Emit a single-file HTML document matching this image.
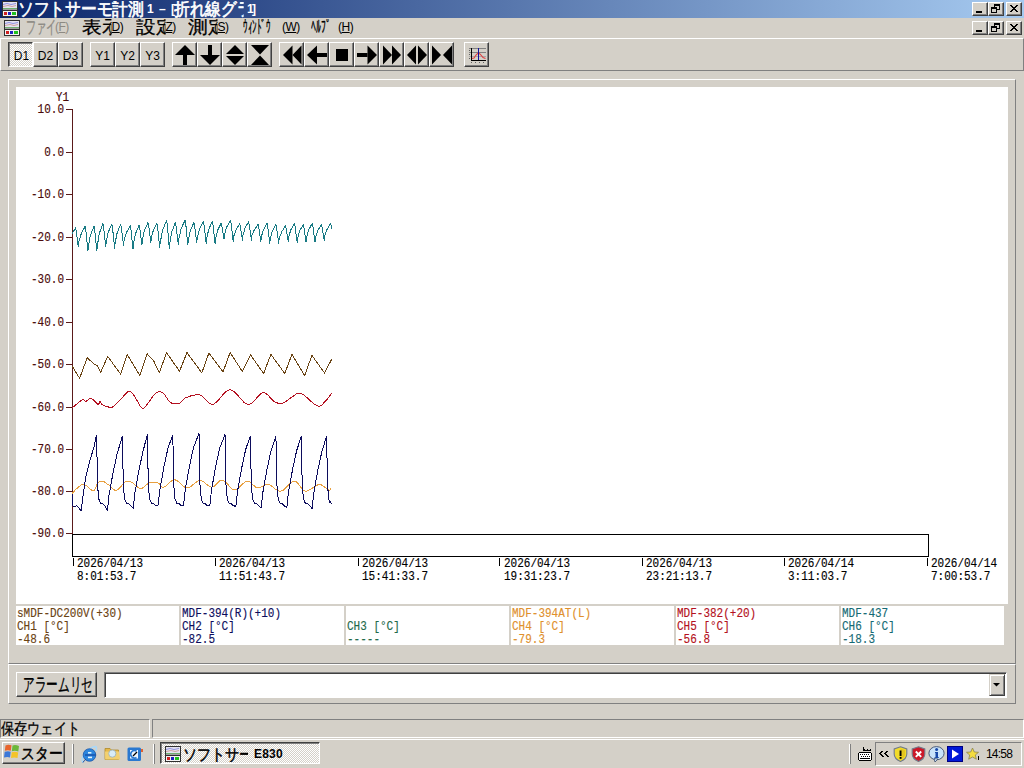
<!DOCTYPE html>
<html><head><meta charset="utf-8">
<style>
*{margin:0;padding:0;box-sizing:border-box}
html,body{width:1024px;height:768px;overflow:hidden;background:#d4d0c8;font-family:"Liberation Sans",sans-serif;font-size:12px;color:#000}
.abs{position:absolute}
.jp{position:absolute;white-space:nowrap;transform-origin:0 0;font-family:"Liberation Sans",sans-serif}
.tx{position:absolute;white-space:nowrap}
#title{position:absolute;left:0;top:0;width:1024px;height:18px;background:linear-gradient(to right,#0a246a,#a6caf0)}
.cb{position:absolute;width:16px;height:14px;background:#d4d0c8;border:1px solid;border-color:#fff #404040 #404040 #fff;box-shadow:inset -1px -1px 0 #808080}
.cb svg{position:absolute;left:0;top:0}
.tb{position:absolute;top:42px;width:25px;height:25px;background:#d4d0c8;border:1px solid;border-color:#fff #404040 #404040 #fff;box-shadow:inset -1px -1px 0 #808080}
.tb.pressed{border-color:#404040 #fff #fff #404040;box-shadow:inset 1px 1px 0 #808080;background-color:#fff;background-image:linear-gradient(45deg,#d4d0c8 25%,transparent 25%,transparent 75%,#d4d0c8 75%),linear-gradient(45deg,#d4d0c8 25%,transparent 25%,transparent 75%,#d4d0c8 75%);background-size:2px 2px;background-position:0 0,1px 1px}
.tbt{position:absolute;left:0;width:23px;top:7px;text-align:center;font-size:12px;line-height:12px}
.raised{position:absolute;border:1px solid;border-color:#fff #808080 #808080 #fff}
.yl{position:absolute;right:960px;font-family:"Liberation Mono",monospace;font-size:11px;line-height:12px;transform:scaleY(1.13);transform-origin:0 0;color:#4a0a0a;white-space:nowrap;text-align:right;-webkit-text-stroke:0.12px #4a0a0a}
.xl{position:absolute;font-family:"Liberation Mono",monospace;font-size:11px;line-height:12px;transform:scaleY(1.13);transform-origin:0 0;color:#000;white-space:nowrap;-webkit-text-stroke:0.12px #000}
.cell{position:absolute;top:606px;width:163px;height:39px;background:#fff;font-family:"Liberation Mono",monospace;font-size:11px;white-space:nowrap;-webkit-text-stroke:0.12px currentColor}
.cell .ln{position:absolute;left:1px;line-height:12px;transform:scaleY(1.13);transform-origin:0 0}
</style></head><body>
<div id="title">
 <svg class="abs" style="left:2px;top:1px" width="16" height="16" viewBox="0 0 16 16">
  <rect x="0" y="0" width="16" height="16" fill="#303030"/>
  <rect x="1" y="1" width="14" height="7" fill="#e4e4f0"/>
  <polyline points="1,3.5 5,2.5 9,3.5 14,2.5" stroke="#9090e0" fill="none"/>
  <polyline points="1,5.5 6,4.5 10,5.5 14,4.5" stroke="#d0a0a0" fill="none"/>
  <rect x="1" y="7" width="14" height="1" fill="#70b070"/>
  <rect x="1" y="8" width="14" height="1" fill="#a0a0a0"/>
  <rect x="1" y="10" width="14" height="5" fill="#f4f4f4"/>
  <rect x="2" y="11" width="3" height="3" fill="#d02020"/>
  <rect x="6" y="11" width="3" height="3" fill="#2020c0"/>
  <rect x="10" y="11" width="4" height="3" fill="#20c020"/>
 </svg>
 <div class="jp" style="left:18.46px;top:0.68px;width:146.59px;height:17.65px;overflow:hidden;font-size:17.65px;line-height:17.65px;transform:scaleX(0.8729);color:#fff;-webkit-text-stroke:0.7px #fff">ソフトサーモ計測－計測</div><div class="tx" style="left:147px;top:3px;font-size:12px;line-height:12px;color:#fff;font-weight:bold;font-family:'Liberation Sans',sans-serif;">1</div><div class="tx" style="left:159px;top:3px;font-size:12px;line-height:12px;color:#fff;font-weight:bold;font-family:'Liberation Sans',sans-serif;">–</div><div class="tx" style="left:171px;top:3px;font-size:12px;line-height:12px;color:#fff;font-weight:bold;font-family:'Liberation Sans',sans-serif;">[</div><div class="jp" style="left:174.47px;top:0.68px;width:80.41px;height:17.65px;overflow:hidden;font-size:17.65px;line-height:17.65px;transform:scaleX(0.8698);color:#fff;-webkit-text-stroke:0.7px #fff">折れ線グラフ</div><div class="tx" style="left:247px;top:3px;font-size:12px;line-height:12px;color:#fff;font-weight:bold;font-family:'Liberation Sans',sans-serif;">1</div><div class="tx" style="left:252px;top:3px;font-size:12px;line-height:12px;color:#fff;font-weight:bold;font-family:'Liberation Sans',sans-serif;">]</div>
 <div class="cb" style="left:972px;top:2px"><svg width="14" height="12"><g fill="#000" shape-rendering="crispEdges"><rect x="3" y="8" width="6" height="1"/><rect x="3" y="9" width="6" height="1"/></g></svg></div><div class="cb" style="left:988px;top:2px"><svg width="14" height="12"><g fill="#000" shape-rendering="crispEdges"><rect x="5" y="1" width="6" height="1"/><rect x="5" y="2" width="6" height="1"/><rect x="5" y="3" width="1" height="1"/><rect x="10" y="3" width="1" height="1"/><rect x="2" y="4" width="6" height="1"/><rect x="10" y="4" width="1" height="1"/><rect x="2" y="5" width="6" height="1"/><rect x="10" y="5" width="1" height="1"/><rect x="2" y="6" width="1" height="1"/><rect x="7" y="6" width="4" height="1"/><rect x="2" y="7" width="1" height="1"/><rect x="7" y="7" width="1" height="1"/><rect x="2" y="8" width="1" height="1"/><rect x="7" y="8" width="1" height="1"/><rect x="2" y="9" width="6" height="1"/></g></svg></div><div class="cb" style="left:1006px;top:2px"><svg width="14" height="12"><g fill="#000" shape-rendering="crispEdges"><rect x="3" y="2" width="2" height="1"/><rect x="9" y="2" width="2" height="1"/><rect x="4" y="3" width="2" height="1"/><rect x="8" y="3" width="2" height="1"/><rect x="5" y="4" width="4" height="1"/><rect x="6" y="5" width="2" height="1"/><rect x="5" y="6" width="4" height="1"/><rect x="4" y="7" width="2" height="1"/><rect x="8" y="7" width="2" height="1"/><rect x="3" y="8" width="2" height="1"/><rect x="9" y="8" width="2" height="1"/></g></svg></div>
</div>
<div id="menu">
 <svg class="abs" style="left:4px;top:20px" width="16" height="16" viewBox="0 0 16 16">
  <rect x="0" y="0" width="16" height="16" fill="#303030"/>
  <rect x="1" y="1" width="14" height="7" fill="#e4e4f0"/>
  <polyline points="1,3.5 5,2.5 9,3.5 14,2.5" stroke="#9090e0" fill="none"/>
  <polyline points="1,5.5 6,4.5 10,5.5 14,4.5" stroke="#d0a0a0" fill="none"/>
  <rect x="1" y="7" width="14" height="1" fill="#70b070"/>
  <rect x="1" y="8" width="14" height="1" fill="#a0a0a0"/>
  <rect x="1" y="10" width="14" height="5" fill="#f4f4f4"/>
  <rect x="2" y="11" width="3" height="3" fill="#d02020"/>
  <rect x="6" y="11" width="3" height="3" fill="#2020c0"/>
  <rect x="10" y="11" width="4" height="3" fill="#20c020"/>
 </svg>
 <div class="jp" style="left:26.00px;top:18.68px;width:53.94px;height:17.65px;overflow:hidden;font-size:17.65px;line-height:17.65px;transform:scaleX(0.5667);color:#8d8a83;-webkit-text-stroke:0.3px #8d8a83">ファイル</div><div class="tx" style="left:55px;top:21px;font-size:12px;line-height:12px;color:#8d8a83;font-weight:normal;font-family:'Liberation Sans',sans-serif;letter-spacing:-0.5px">(<u>F</u>)</div><div class="jp" style="left:82.08px;top:18.68px;width:27.47px;height:17.65px;overflow:hidden;font-size:17.65px;line-height:17.65px;transform:scaleX(1.0897);color:#000;-webkit-text-stroke:0.3px #000">表示</div><div class="tx" style="left:108px;top:21px;font-size:12px;line-height:12px;color:#000;font-weight:normal;font-family:'Liberation Sans',sans-serif;letter-spacing:-0.5px">(<u>D</u>)</div><div class="jp" style="left:136.08px;top:18.68px;width:27.47px;height:17.65px;overflow:hidden;font-size:17.65px;line-height:17.65px;transform:scaleX(1.0897);color:#000;-webkit-text-stroke:0.3px #000">設定</div><div class="tx" style="left:162px;top:21px;font-size:12px;line-height:12px;color:#000;font-weight:normal;font-family:'Liberation Sans',sans-serif;letter-spacing:-0.5px">(<u>Z</u>)</div><div class="jp" style="left:188.08px;top:18.68px;width:27.47px;height:17.65px;overflow:hidden;font-size:17.65px;line-height:17.65px;transform:scaleX(1.0897);color:#000;-webkit-text-stroke:0.3px #000">測定</div><div class="tx" style="left:214px;top:21px;font-size:12px;line-height:12px;color:#000;font-weight:normal;font-family:'Liberation Sans',sans-serif;letter-spacing:-0.5px">(<u>S</u>)</div><div class="jp" style="left:243.12px;top:18.68px;width:80.41px;height:17.65px;overflow:hidden;font-size:17.65px;line-height:17.65px;transform:scaleX(0.5008);color:#000;-webkit-text-stroke:0.3px #000">ｳｨﾝﾄﾞｳ</div><div class="tx" style="left:282px;top:21px;font-size:12px;line-height:12px;color:#000;font-weight:normal;font-family:'Liberation Sans',sans-serif;letter-spacing:-0.5px">(<u>W</u>)</div><div class="jp" style="left:311.04px;top:18.68px;width:53.94px;height:17.65px;overflow:hidden;font-size:17.65px;line-height:17.65px;transform:scaleX(0.5464);color:#000;-webkit-text-stroke:0.3px #000">ﾍﾙﾌﾟ</div><div class="tx" style="left:338px;top:21px;font-size:12px;line-height:12px;color:#000;font-weight:normal;font-family:'Liberation Sans',sans-serif;letter-spacing:-0.5px">(<u>H</u>)</div>
 <div class="cb" style="left:972px;top:21px"><svg width="14" height="12"><g fill="#000" shape-rendering="crispEdges"><rect x="3" y="8" width="6" height="1"/><rect x="3" y="9" width="6" height="1"/></g></svg></div><div class="cb" style="left:988px;top:21px"><svg width="14" height="12"><g fill="#000" shape-rendering="crispEdges"><rect x="5" y="1" width="6" height="1"/><rect x="5" y="2" width="6" height="1"/><rect x="5" y="3" width="1" height="1"/><rect x="10" y="3" width="1" height="1"/><rect x="2" y="4" width="6" height="1"/><rect x="10" y="4" width="1" height="1"/><rect x="2" y="5" width="6" height="1"/><rect x="10" y="5" width="1" height="1"/><rect x="2" y="6" width="1" height="1"/><rect x="7" y="6" width="4" height="1"/><rect x="2" y="7" width="1" height="1"/><rect x="7" y="7" width="1" height="1"/><rect x="2" y="8" width="1" height="1"/><rect x="7" y="8" width="1" height="1"/><rect x="2" y="9" width="6" height="1"/></g></svg></div><div class="cb" style="left:1006px;top:21px"><svg width="14" height="12"><g fill="#000" shape-rendering="crispEdges"><rect x="3" y="2" width="2" height="1"/><rect x="9" y="2" width="2" height="1"/><rect x="4" y="3" width="2" height="1"/><rect x="8" y="3" width="2" height="1"/><rect x="5" y="4" width="4" height="1"/><rect x="6" y="5" width="2" height="1"/><rect x="5" y="6" width="4" height="1"/><rect x="4" y="7" width="2" height="1"/><rect x="8" y="7" width="2" height="1"/><rect x="3" y="8" width="2" height="1"/><rect x="9" y="8" width="2" height="1"/></g></svg></div>
</div>
<div class="abs" style="left:0;top:38px;width:1024px;height:33px;border:1px solid;border-color:#fff #808080 #808080 #fff"></div>
<div class="tb pressed" style="left:8px"><span class="tbt" style="left:1px">D1</span></div><div class="tb" style="left:33px"><span class="tbt">D2</span></div><div class="tb" style="left:58px"><span class="tbt">D3</span></div><div class="tb" style="left:90px"><span class="tbt">Y1</span></div><div class="tb" style="left:115px"><span class="tbt">Y2</span></div><div class="tb" style="left:140px"><span class="tbt">Y3</span></div><div class="tb" style="left:172px"><svg width="25" height="25" viewBox="172 42 25 25" style="position:absolute;left:-1px;top:-1px"><polygon points="175,55 185,45 195,55"/><rect x="183" y="55" width="4" height="10"/></svg></div><div class="tb" style="left:197px"><svg width="25" height="25" viewBox="197 42 25 25" style="position:absolute;left:-1px;top:-1px"><rect x="208" y="45" width="4" height="10"/><polygon points="200,55 220,55 210,65"/></svg></div><div class="tb" style="left:222px"><svg width="25" height="25" viewBox="222 42 25 25" style="position:absolute;left:-1px;top:-1px"><polygon points="226,54 235,45 244,54"/><polygon points="226,56 244,56 235,65"/></svg></div><div class="tb" style="left:247px"><svg width="25" height="25" viewBox="247 42 25 25" style="position:absolute;left:-1px;top:-1px"><polygon points="251,45 269,45 260,54.5"/><polygon points="260,55.5 269,65 251,65"/></svg></div><div class="tb" style="left:279px"><svg width="25" height="25" viewBox="279 42 25 25" style="position:absolute;left:-1px;top:-1px"><polygon points="283,55 292.5,45.5 292.5,64.5"/><polygon points="292.5,55 301.5,45.5 301.5,64.5"/></svg></div><div class="tb" style="left:304px"><svg width="25" height="25" viewBox="304 42 25 25" style="position:absolute;left:-1px;top:-1px"><polygon points="307,55 317,45.5 317,64.5"/><rect x="317" y="53" width="10" height="4"/></svg></div><div class="tb" style="left:329px"><svg width="25" height="25" viewBox="329 42 25 25" style="position:absolute;left:-1px;top:-1px"><rect x="336" y="49" width="12" height="12"/></svg></div><div class="tb" style="left:354px"><svg width="25" height="25" viewBox="354 42 25 25" style="position:absolute;left:-1px;top:-1px"><rect x="357" y="53" width="10.5" height="4"/><polygon points="367.5,45.5 377,55 367.5,64.5"/></svg></div><div class="tb" style="left:379px"><svg width="25" height="25" viewBox="379 42 25 25" style="position:absolute;left:-1px;top:-1px"><polygon points="383,45.5 392,55 383,64.5"/><polygon points="392,45.5 401,55 392,64.5"/></svg></div><div class="tb" style="left:404px"><svg width="25" height="25" viewBox="404 42 25 25" style="position:absolute;left:-1px;top:-1px"><polygon points="407,55 416,45.5 416,64.5"/><polygon points="418,45.5 427,55 418,64.5"/></svg></div><div class="tb" style="left:429px"><svg width="25" height="25" viewBox="429 42 25 25" style="position:absolute;left:-1px;top:-1px"><polygon points="432,45.5 441,55 432,64.5"/><polygon points="443,55 452,45.5 452,64.5"/></svg></div><div class="tb" style="left:464px"><svg width="25" height="25" viewBox="464 42 25 25" style="position:absolute;left:-1px;top:-1px"><g stroke="#808080" stroke-width="1" shape-rendering="crispEdges"><line x1="469" y1="48.5" x2="486" y2="48.5"/><line x1="469" y1="52.5" x2="486" y2="52.5"/><line x1="469" y1="56.5" x2="486" y2="56.5" stroke="#a8a8a8"/></g><g shape-rendering="crispEdges"><rect x="471" y="48" width="1" height="13" fill="#000"/><rect x="471" y="60" width="15" height="1" fill="#000"/><g fill="#606060"><rect x="469" y="50" width="1" height="1"/><rect x="469" y="54" width="1" height="1"/><rect x="469" y="58" width="1" height="1"/><rect x="471" y="62" width="1" height="1"/><rect x="475" y="62" width="1" height="1"/><rect x="479" y="62" width="1" height="1"/><rect x="483" y="62" width="1" height="1"/></g></g><polyline points="472,58.5 474,58 476,55 478.5,52.5 481,55 483,57.5 485.5,58.5" fill="none" stroke="#e04040" stroke-width="1.1"/><rect x="478" y="48" width="1.3" height="12" fill="#1010a0" shape-rendering="crispEdges"/></svg></div>
<div class="raised" style="left:8px;top:79px;width:1008px;height:585px"></div>
<div class="abs" style="left:16px;top:87px;width:992px;height:517px;background:#fff"></div>
<svg class="abs" style="left:0;top:0" width="1024" height="768" viewBox="0 0 1024 768">
 <g stroke="#5a1a1a" stroke-width="1">
  <line x1="72.5" y1="109" x2="72.5" y2="534"/>
  <line x1="66" y1="109.5" x2="72" y2="109.5"/><line x1="66" y1="152.5" x2="72" y2="152.5"/><line x1="66" y1="194.5" x2="72" y2="194.5"/><line x1="66" y1="237.5" x2="72" y2="237.5"/><line x1="66" y1="279.5" x2="72" y2="279.5"/><line x1="66" y1="322.5" x2="72" y2="322.5"/><line x1="66" y1="364.5" x2="72" y2="364.5"/><line x1="66" y1="407.5" x2="72" y2="407.5"/><line x1="66" y1="449.5" x2="72" y2="449.5"/><line x1="66" y1="491.5" x2="72" y2="491.5"/><line x1="66" y1="533.5" x2="72" y2="533.5"/>
 </g>
 <rect x="72.5" y="534.5" width="856" height="22" fill="none" stroke="#000"/>
 <g stroke="#000"><line x1="73.5" y1="558" x2="73.5" y2="566"/><line x1="215.5" y1="558" x2="215.5" y2="566"/><line x1="358.5" y1="558" x2="358.5" y2="566"/><line x1="499.5" y1="558" x2="499.5" y2="566"/><line x1="642.5" y1="558" x2="642.5" y2="566"/><line x1="784.5" y1="558" x2="784.5" y2="566"/><line x1="927.5" y1="558" x2="927.5" y2="566"/></g>
 <g fill="none" stroke-width="1" stroke-linejoin="round" shape-rendering="crispEdges">
  <polyline points="72.00,234.00 75.50,227.80 76.30,231.80 78.30,246.90 78.80,241.90 81.26,233.58 85.10,226.40 85.90,230.40 87.90,251.00 88.40,246.00 90.44,235.01 94.00,226.40 94.80,230.40 96.80,251.00 97.30,246.00 99.34,233.25 102.90,223.70 103.70,227.70 105.70,246.90 106.20,241.90 108.24,232.28 111.80,224.40 112.60,228.40 114.60,248.30 115.10,243.30 117.14,232.77 120.70,224.40 121.50,228.40 123.50,245.60 124.00,240.60 126.40,232.66 130.20,225.70 131.00,229.70 133.00,249.00 133.50,244.00 135.54,233.59 139.10,225.30 139.90,229.30 141.90,244.90 142.40,239.90 144.44,230.41 148.00,222.60 148.80,226.60 150.80,242.80 151.30,237.80 153.34,230.38 156.90,223.70 157.70,227.70 159.70,247.60 160.20,242.60 162.66,230.11 166.50,220.70 167.30,224.70 169.30,248.30 169.80,243.30 171.84,231.59 175.40,222.60 176.20,226.60 178.20,244.20 178.70,239.20 181.16,228.66 185.00,220.30 185.80,224.30 187.80,244.90 188.30,239.90 190.34,230.41 193.90,222.60 194.70,226.60 196.70,242.80 197.20,237.80 199.60,229.02 203.40,221.60 204.20,225.60 206.20,243.50 206.70,238.50 208.74,229.26 212.30,221.60 213.10,225.60 215.10,243.50 215.60,238.50 217.64,230.18 221.20,223.00 222.00,227.00 224.00,239.40 224.50,234.40 226.72,226.99 230.40,220.30 231.20,224.30 233.20,241.50 233.70,236.50 235.98,229.93 239.70,223.70 240.50,227.70 242.50,240.10 243.00,235.10 245.04,228.07 248.60,221.60 249.40,225.60 251.40,240.10 251.90,235.10 254.30,229.90 258.10,224.40 258.90,228.40 260.90,241.50 261.40,236.50 263.44,229.74 267.00,223.40 267.80,227.40 269.80,243.50 270.30,238.50 272.34,231.09 275.90,224.40 276.70,228.40 278.70,243.50 279.20,238.50 281.66,231.93 285.50,225.70 286.30,229.70 288.30,241.50 288.80,236.50 290.84,229.74 294.40,223.40 295.20,227.40 297.20,242.80 297.70,237.80 299.74,230.84 303.30,224.40 304.10,228.40 306.10,242.10 306.60,237.10 308.64,229.94 312.20,223.40 313.00,227.40 315.00,242.10 315.50,237.10 317.78,230.59 321.50,224.40 322.30,228.40 324.30,240.80 324.80,235.80 326.96,229.49 330.60,223.40 332.00,229.00" stroke="#187a84"/>
  <polyline points="72.00,366.00 79.60,378.30 87.20,357.80 94.00,364.00 97.40,365.60 100.80,372.80 102.50,368.00 107.70,356.40 120.70,374.20 127.10,354.40 139.80,375.60 147.00,353.70 153.50,360.50 159.40,372.80 166.50,352.60 179.50,371.20 187.00,352.60 201.80,372.80 208.90,353.00 223.00,372.00 230.10,352.60 242.40,371.50 250.60,355.00 263.60,373.50 270.90,354.40 284.80,373.50 291.90,354.40 304.70,375.60 311.90,355.30 324.50,373.00 331.60,359.40" stroke="#6a4414"/>
  <polyline points="72.00,408.00 73.53,406.73 75.75,404.84 78.24,402.77 80.60,400.94 82.40,399.80 83.52,399.56 84.23,399.95 84.73,400.61 85.19,401.21 85.80,401.40 86.59,401.04 87.42,400.36 88.28,399.57 89.11,398.88 89.90,398.50 90.60,398.44 91.24,398.56 91.87,398.84 92.54,399.26 93.30,399.80 94.22,400.63 95.25,401.78 96.31,402.96 97.30,403.93 98.10,404.40 98.68,404.15 99.10,403.36 99.43,402.38 99.74,401.54 100.10,401.20 100.46,401.48 100.77,402.15 101.11,403.02 101.56,403.90 102.20,404.60 103.10,405.13 104.22,405.60 105.44,406.02 106.64,406.39 107.70,406.70 108.54,407.06 109.24,407.46 109.93,407.76 110.74,407.79 111.80,407.40 113.18,406.49 114.78,405.16 116.52,403.56 118.29,401.86 120.00,400.20 121.68,398.38 123.41,396.28 125.11,394.24 126.73,392.57 128.20,391.60 129.44,391.37 130.50,391.66 131.49,392.42 132.52,393.55 133.70,395.00 135.13,397.11 136.72,399.94 138.35,402.95 139.89,405.61 141.20,407.40 142.17,408.26 142.89,408.56 143.53,408.35 144.27,407.71 145.30,406.70 146.73,405.04 148.45,402.69 150.27,400.07 152.01,397.60 153.50,395.70 154.67,394.41 155.63,393.44 156.49,392.74 157.35,392.28 158.30,392.00 159.33,391.88 160.39,391.95 161.47,392.24 162.61,392.81 163.80,393.70 165.04,395.15 166.33,397.14 167.67,399.28 169.08,401.23 170.60,402.60 172.29,403.36 174.14,403.77 176.04,403.86 177.87,403.69 179.50,403.30 180.77,402.55 181.74,401.42 182.70,400.10 183.89,398.83 185.60,397.80 187.97,396.87 190.83,395.90 193.94,395.11 197.08,394.74 200.00,395.00 202.62,396.49 205.10,399.04 207.57,401.80 210.16,403.87 213.00,404.40 216.15,402.51 219.51,398.79 223.01,394.54 226.57,391.04 230.10,389.60 233.66,391.12 237.30,394.75 240.95,399.11 244.51,402.85 247.90,404.60 251.14,403.60 254.29,400.76 257.32,397.21 260.20,394.11 262.90,392.60 265.40,393.11 267.72,394.87 269.89,397.24 271.94,399.57 273.90,401.20 275.68,402.18 277.25,402.94 278.76,403.42 280.33,403.56 282.10,403.30 284.15,402.43 286.40,401.00 288.70,399.31 290.95,397.67 293.00,396.40 294.68,395.30 296.08,394.17 297.46,393.29 299.08,392.94 301.20,393.40 304.08,395.21 307.56,398.19 311.23,401.51 314.71,404.39 317.60,406.00 319.82,406.08 321.63,405.18 323.16,403.68 324.54,401.99 325.90,400.50 327.30,399.07 328.64,397.43 329.86,395.81 330.87,394.39 331.60,393.40" stroke="#b41020"/>
  <polyline points="72.00,493.40 72.98,492.40 74.37,490.94 75.98,489.31 77.59,487.77 79.00,486.60 80.13,485.75 81.11,485.02 82.06,484.52 83.12,484.31 84.40,484.50 86.03,485.42 87.94,487.01 89.92,488.76 91.77,490.17 93.30,490.70 94.42,490.09 95.25,488.68 95.94,486.89 96.61,485.12 97.40,483.80 98.28,482.88 99.17,482.09 100.10,481.49 101.10,481.14 102.20,481.10 103.42,481.47 104.74,482.20 106.13,483.15 107.56,484.20 109.00,485.20 110.45,486.39 111.92,487.86 113.43,489.26 114.98,490.23 116.60,490.40 118.33,489.41 120.17,487.51 122.03,485.23 123.83,483.15 125.50,481.80 126.97,481.26 128.30,481.15 129.58,481.38 130.88,481.87 132.30,482.50 133.83,483.57 135.42,485.14 137.06,486.78 138.75,488.07 140.50,488.60 142.34,488.05 144.26,486.72 146.22,485.04 148.16,483.49 150.00,482.50 151.78,482.14 153.54,482.09 155.24,482.29 156.84,482.65 158.30,483.10 159.49,483.88 160.44,485.04 161.35,486.23 162.40,487.07 163.80,487.20 165.61,486.19 167.70,484.28 169.98,482.12 172.34,480.37 174.70,479.70 177.06,480.60 179.49,482.65 181.96,485.07 184.47,487.10 187.00,488.00 189.58,487.27 192.22,485.41 194.87,483.17 197.48,481.25 200.00,480.40 202.45,481.06 204.87,482.74 207.22,484.77 209.48,486.48 211.60,487.20 213.62,486.58 215.55,485.07 217.36,483.18 219.03,481.45 220.50,480.40 221.65,480.05 222.48,480.04 223.23,480.36 224.10,480.95 225.30,481.80 226.87,483.28 228.66,485.41 230.64,487.62 232.73,489.35 234.90,490.00 237.22,489.06 239.72,486.92 242.29,484.35 244.82,482.15 247.20,481.10 249.38,481.62 251.44,483.18 253.43,485.16 255.43,486.94 257.50,487.90 259.62,487.71 261.75,486.78 263.91,485.62 266.12,484.69 268.40,484.50 270.75,485.48 273.15,487.30 275.61,489.31 278.13,490.86 280.70,491.30 283.40,490.02 286.21,487.46 289.05,484.53 291.82,482.11 294.40,481.10 296.71,482.11 298.83,484.53 300.87,487.46 302.99,490.02 305.30,491.30 307.93,490.83 310.78,489.21 313.68,487.15 316.48,485.34 319.00,484.50 321.30,484.92 323.48,486.15 325.48,487.71 327.21,489.14 328.60,490.00 329.58,490.14 330.19,489.87 330.56,489.39 330.79,488.90 331.00,488.60" stroke="#e8a040"/>
  <polyline points="72.00,493.40 72.50,505.70 74.20,507.00 76.90,505.70 79.00,508.00 81.00,511.20 83.00,496.10 85.80,477.00 89.90,460.60 94.00,446.90 96.50,435.30 96.80,445.30 97.50,485.00 98.80,499.00 100.80,503.70 102.90,503.70 104.90,505.70 107.40,510.50 109.00,495.50 113.10,472.50 117.20,453.50 122.30,436.60 122.60,446.60 123.30,485.00 124.60,499.00 126.60,503.70 128.70,503.70 130.70,505.70 133.20,508.40 134.80,493.40 138.90,470.40 143.00,451.40 147.30,434.60 147.60,444.60 148.30,485.00 149.60,499.00 151.60,503.70 153.70,503.70 155.70,505.70 158.20,505.00 159.80,490.00 163.90,467.00 168.00,448.00 172.70,435.30 173.00,445.30 173.70,485.00 175.00,499.00 177.00,503.70 179.10,503.70 181.10,505.70 183.60,505.00 185.20,490.00 189.30,467.00 193.40,448.00 199.00,433.20 199.30,443.20 200.00,485.00 201.30,499.00 203.30,503.70 205.40,503.70 207.40,505.70 209.90,505.00 211.50,490.00 215.60,467.00 219.70,448.00 225.00,434.60 225.30,444.60 226.00,485.00 227.30,499.00 229.30,503.70 231.40,503.70 233.40,505.70 235.90,506.40 237.50,491.40 241.60,468.40 245.70,449.40 250.30,436.00 250.60,446.00 251.30,485.00 252.60,499.00 254.60,503.70 256.70,503.70 258.70,505.70 261.20,507.80 262.80,492.80 266.90,469.80 271.00,450.80 275.90,436.60 276.20,446.60 276.90,485.00 278.20,499.00 280.20,503.70 282.30,503.70 284.30,505.70 286.80,507.80 288.40,492.80 292.50,469.80 296.60,450.80 301.20,436.60 301.50,446.60 302.20,485.00 303.50,499.00 305.50,503.70 307.60,503.70 309.60,505.70 312.10,508.40 313.70,493.40 317.80,470.40 321.90,451.40 326.50,436.60 326.80,446.60 327.50,485.00 328.80,499.00 329.80,503.00 330.50,501.50 331.30,503.70" stroke="#0c0c5c"/>
 </g>
</svg>
<div class="yl" style="top:91px;right:955px">Y1</div>
<div class="yl" style="top:103px">10.0</div><div class="yl" style="top:146px">0.0</div><div class="yl" style="top:188px">-10.0</div><div class="yl" style="top:231px">-20.0</div><div class="yl" style="top:273px">-30.0</div><div class="yl" style="top:316px">-40.0</div><div class="yl" style="top:358px">-50.0</div><div class="yl" style="top:401px">-60.0</div><div class="yl" style="top:443px">-70.0</div><div class="yl" style="top:485px">-80.0</div><div class="yl" style="top:527px">-90.0</div>
<div class="xl" style="left:77px;top:557px">2026/04/13</div><div class="xl" style="left:77px;top:570px">8:01:53.7</div><div class="xl" style="left:219px;top:557px">2026/04/13</div><div class="xl" style="left:219px;top:570px">11:51:43.7</div><div class="xl" style="left:362px;top:557px">2026/04/13</div><div class="xl" style="left:362px;top:570px">15:41:33.7</div><div class="xl" style="left:504px;top:557px">2026/04/13</div><div class="xl" style="left:504px;top:570px">19:31:23.7</div><div class="xl" style="left:646px;top:557px">2026/04/13</div><div class="xl" style="left:646px;top:570px">23:21:13.7</div><div class="xl" style="left:788px;top:557px">2026/04/14</div><div class="xl" style="left:788px;top:570px">3:11:03.7</div><div class="xl" style="left:931px;top:557px">2026/04/14</div><div class="xl" style="left:931px;top:570px">7:00:53.7</div>
<div class="cell" style="left:16px;color:#6a4212"><div class="ln" style="top:1px">sMDF-DC200V(+30)</div><div class="ln" style="top:14px">CH1 [°C]</div><div class="ln" style="top:27px">-48.6</div></div><div class="cell" style="left:181px;color:#0c0c5c"><div class="ln" style="top:1px">MDF-394(R)(+10)</div><div class="ln" style="top:14px">CH2 [°C]</div><div class="ln" style="top:27px">-82.5</div></div><div class="cell" style="left:346px;color:#1e6a4a"><div class="ln" style="top:1px"></div><div class="ln" style="top:14px">CH3 [°C]</div><div class="ln" style="top:27px">-----</div></div><div class="cell" style="left:511px;color:#e0902c"><div class="ln" style="top:1px">MDF-394AT(L)</div><div class="ln" style="top:14px">CH4 [°C]</div><div class="ln" style="top:27px">-79.3</div></div><div class="cell" style="left:676px;color:#b41020"><div class="ln" style="top:1px">MDF-382(+20)</div><div class="ln" style="top:14px">CH5 [°C]</div><div class="ln" style="top:27px">-56.8</div></div><div class="cell" style="left:841px;color:#146a74"><div class="ln" style="top:1px">MDF-437</div><div class="ln" style="top:14px">CH6 [°C]</div><div class="ln" style="top:27px">-18.3</div></div>
<div class="raised" style="left:8px;top:664px;width:1008px;height:40px"></div>
<div class="abs" style="left:16px;top:672px;width:81px;height:25px;border:1px solid;border-color:#fff #404040 #404040 #fff;box-shadow:inset -1px -1px 0 #808080"></div>
<div class="jp" style="left:22.83px;top:675.44px;width:115.71px;height:19.12px;overflow:hidden;font-size:19.12px;line-height:19.12px;transform:scaleX(0.6133);color:#000;-webkit-text-stroke:0.3px #000">アラームリセット</div>
<div class="abs" style="left:104px;top:672px;width:903px;height:26px;background:#fff;border:1px solid;border-color:#808080 #fff #fff #808080;box-shadow:inset 1px 1px 0 #404040">
 <div class="abs" style="left:884px;top:1px;width:16px;height:22px;background:#d4d0c8;border:1px solid;border-color:#d4d0c8 #404040 #404040 #d4d0c8;box-shadow:inset 1px 1px 0 #fff,inset -1px -1px 0 #808080"><svg width="14" height="20" class="abs" style="left:0;top:0"><polygon points="3,8 10,8 6.5,11.5" fill="#000"/></svg></div>
</div>
<div class="abs" style="left:0;top:719px;width:150px;height:19px;border:1px solid;border-color:#808080 #fff #fff #808080"></div>
<div class="jp" style="left:0.67px;top:719.91px;width:98.06px;height:16.18px;overflow:hidden;font-size:16.18px;line-height:16.18px;transform:scaleX(0.8207);color:#000;-webkit-text-stroke:0.3px #000">保存ウェイト！！</div>
<div class="abs" style="left:152px;top:719px;width:872px;height:19px;border:1px solid;border-color:#808080 #fff #fff #808080"></div>
<div class="abs" style="left:0;top:738px;width:1024px;height:30px;background:#d4d0c8;border-top:1px solid #d4d0c8;box-shadow:inset 0 1px 0 #fff"></div>
<div class="abs" style="left:2px;top:742px;width:63px;height:22px;border:1px solid;border-color:#fff #404040 #404040 #fff;box-shadow:inset -1px -1px 0 #808080"></div>
<svg class="abs" style="left:4px;top:744px" width="16" height="15" viewBox="0 0 16 15">
 <path d="M1.5 1.5 Q4 0 7.5 1.2 L6.8 6.8 Q4 5.6 0.8 6.8Z" fill="#e8642c"/>
 <path d="M8.5 1.5 Q11.5 0.5 15 2 L14.3 7.5 Q11 6.3 7.8 7.2Z" fill="#6cb83a"/>
 <path d="M0.7 7.8 Q4 6.6 6.7 7.8 L6 13.5 Q3.5 12.3 0 13.5Z" fill="#3c78d8"/>
 <path d="M7.7 8.2 Q11 7.3 14.2 8.5 L13.5 14 Q10.5 13 7 14Z" fill="#f4c42a"/>
</svg>
<div class="jp" style="left:20.61px;top:744.91px;width:49.53px;height:16.18px;overflow:hidden;font-size:16.18px;line-height:16.18px;transform:scaleX(0.8610);color:#000;-webkit-text-stroke:0.5px #000">スタート</div>
<div class="abs" style="left:72px;top:744px;width:2px;height:20px;border-left:1px solid #fff;border-right:1px solid #808080"></div>
<svg class="abs" style="left:78px;top:743px" width="22" height="22" viewBox="0 0 22 22">
 <path d="M5 19.5 Q2.5 16 7.5 10 Q13 3.5 17.5 3.5 Q19.5 4.5 17.5 8" stroke="#a8d8fa" stroke-width="1.6" fill="none"/>
 <circle cx="11.5" cy="12" r="6.3" fill="#2c86de" stroke="#1a50a0" stroke-width="0.7"/>
 <rect x="10" y="9" width="3.4" height="1.6" fill="#d8f2ff"/>
 <rect x="7" y="11.2" width="11" height="1.6" fill="#1c58b0"/>
 <rect x="10" y="13.6" width="4" height="1.6" fill="#e8f6ff"/>
 <path d="M5 19.5 Q6 17.5 8 16" stroke="#1a50a0" stroke-width="1" fill="none"/>
</svg>
<svg class="abs" style="left:104px;top:746px" width="17" height="15" viewBox="0 0 17 15">
 <path d="M1 2.5 h5 l1.5 1.5 h7 v9.5 h-13.5Z" fill="#e6b84a" stroke="#b08a2a" stroke-width="0.8"/>
 <path d="M1 5.5 h14 l1.2 8 h-15Z" fill="#f2d070"/>
 <circle cx="8.3" cy="7.6" r="3.6" fill="#d8ecf6" stroke="#9ab0b8" stroke-width="0.8"/>
</svg>
<svg class="abs" style="left:127px;top:746px" width="16" height="16" viewBox="0 0 16 16">
 <rect x="0.5" y="1.5" width="13.5" height="13.5" rx="1.5" fill="#2a78d0"/>
 <path d="M3 4 H11 V12.5 H3Z" fill="#eef6ff"/>
 <path d="M9.5 5 A3.8 3.8 0 1 0 9.5 11.5" stroke="#2a78d0" stroke-width="1.6" fill="none"/>
 <path d="M6 10 L10 6" stroke="#000" stroke-width="1.2"/>
 <rect x="14" y="3" width="2" height="3" fill="#e06030"/>
</svg>
<div class="abs" style="left:153px;top:744px;width:2px;height:20px;border-left:1px solid #fff;border-right:1px solid #808080"></div>
<div class="abs" style="left:160px;top:742px;width:160px;height:22px;border:1px solid;border-color:#404040 #fff #fff #404040;box-shadow:inset 1px 1px 0 #808080;background-color:#fff;background-image:linear-gradient(45deg,#d4d0c8 25%,transparent 25%,transparent 75%,#d4d0c8 75%),linear-gradient(45deg,#d4d0c8 25%,transparent 25%,transparent 75%,#d4d0c8 75%);background-size:2px 2px;background-position:0 0,1px 1px">
 <svg class="abs" style="left:4px;top:3px" width="16" height="16" viewBox="0 0 16 16">
  <rect x="0" y="0" width="16" height="16" fill="#303030"/>
  <rect x="1" y="1" width="14" height="7" fill="#e4e4f0"/>
  <polyline points="1,3.5 5,2.5 9,3.5 14,2.5" stroke="#9090e0" fill="none"/>
  <polyline points="1,5.5 6,4.5 10,5.5 14,4.5" stroke="#d0a0a0" fill="none"/>
  <rect x="1" y="7" width="14" height="1" fill="#70b070"/>
  <rect x="1" y="8" width="14" height="1" fill="#a0a0a0"/>
  <rect x="1" y="10" width="14" height="5" fill="#f4f4f4"/>
  <rect x="2" y="11" width="3" height="3" fill="#d02020"/>
  <rect x="6" y="11" width="3" height="3" fill="#2020c0"/>
  <rect x="10" y="11" width="4" height="3" fill="#20c020"/>
 </svg>
</div>
<div class="jp" style="left:182.58px;top:745.91px;width:73.79px;height:16.18px;overflow:hidden;font-size:16.18px;line-height:16.18px;transform:scaleX(0.8770);color:#000;-webkit-text-stroke:0.5px #000">ソフトサーモ</div>
<div class="tx" style="left:254px;top:748px;font-size:12px;line-height:12px;color:#000;font-weight:bold;font-family:'Liberation Sans',sans-serif;letter-spacing:0.2px">E830</div>
<div class="abs" style="left:849px;top:744px;width:2px;height:20px;border-left:1px solid #fff;border-right:1px solid #808080"></div>
<svg class="abs" style="left:858px;top:747px" width="14" height="15" viewBox="0 0 14 15" shape-rendering="crispEdges">
 <path d="M5 0h1v2h1v1h2v-1h1v1h2v-1h1v2h-8z" fill="#000"/>
 <rect x="1" y="5" width="12" height="1" fill="#000"/><rect x="1" y="13" width="12" height="1" fill="#000"/>
 <rect x="0" y="6" width="1" height="7" fill="#000"/><rect x="13" y="6" width="1" height="7" fill="#000"/>
 <rect x="1" y="6" width="12" height="7" fill="#fff"/>
 <g fill="#000"><rect x="2" y="7" width="1" height="1"/><rect x="4" y="7" width="1" height="1"/><rect x="6" y="7" width="1" height="1"/><rect x="8" y="7" width="1" height="1"/><rect x="10" y="7" width="1" height="1"/>
 <rect x="3" y="9" width="1" height="1"/><rect x="5" y="9" width="1" height="1"/><rect x="7" y="9" width="1" height="1"/><rect x="9" y="9" width="1" height="1"/><rect x="11" y="9" width="1" height="1"/>
 <rect x="2" y="11" width="10" height="1"/></g>
</svg>
<div class="abs" style="left:875px;top:742px;width:147px;height:24px;border:1px solid;border-color:#808080 #fff #fff #808080"></div>
<svg class="abs" style="left:879px;top:751px" width="10" height="7" viewBox="0 0 10 7" shape-rendering="crispEdges"><path d="M3 0h2v1h-1v1h-1v1h1v1h1v1h1v1h-2v-1h-1v-1h-1v-1h-1v-1h1v-1h1z M8 0h2v1h-1v1h-1v1h1v1h1v1h1v1h-2v-1h-1v-1h-1v-1h-1v-1h1v-1h1z" fill="#000" transform="translate(-1.5,0)"/></svg>
<svg class="abs" style="left:893px;top:746px" width="15" height="16" viewBox="0 0 15 16"><path d="M7.5 0.8 L13.8 3 V8 Q13.8 12.8 7.5 15.4 Q1.2 12.8 1.2 8 V3Z" fill="#f2dc2a" stroke="#707a8a" stroke-width="1.1"/><path d="M7.5 2.5 L12 4 V8 Q12 11.5 7.5 13.5Z" fill="#d8b010" opacity="0.5"/><rect x="6.6" y="4.5" width="1.9" height="5.5" fill="#000"/><rect x="6.6" y="11" width="1.9" height="1.8" fill="#000"/></svg>
<svg class="abs" style="left:911px;top:746px" width="15" height="16" viewBox="0 0 15 16"><path d="M7.5 0.8 L13.8 3 V8 Q13.8 12.8 7.5 15.4 Q1.2 12.8 1.2 8 V3Z" fill="#cc1828" stroke="#707a8a" stroke-width="1.1"/><path d="M4.8 5.5l5.4 5.4M10.2 5.5l-5.4 5.4" stroke="#fff" stroke-width="1.9"/></svg>
<svg class="abs" style="left:928px;top:746px" width="18" height="17" viewBox="0 0 18 17"><ellipse cx="8.5" cy="7.2" rx="7.6" ry="6.6" fill="#c8e2fa" stroke="#3a4a6a" stroke-width="0.9"/><path d="M6 12.5 L7 16 L10 13Z" fill="#c8e2fa" stroke="#3a4a6a" stroke-width="0.8"/><circle cx="8.6" cy="3.6" r="1.5" fill="#1848a8"/><path d="M7 6 H10 V11.2 H11 V12 H6.5 V11.2 H7.5 V7 H7Z" fill="#1848a8"/></svg>
<svg class="abs" style="left:947px;top:746px" width="16" height="16" viewBox="0 0 16 16" shape-rendering="crispEdges"><rect x="0" y="0" width="16" height="16" fill="#000080"/><rect x="1" y="1" width="14" height="14" fill="#0018d8"/><polygon points="5,3.5 12,8 5,12.5" fill="#fff" shape-rendering="geometricPrecision"/></svg>
<svg class="abs" style="left:966px;top:747px" width="14" height="14" viewBox="0 0 14 14"><polygon points="6.5,1 8.3,5 12.5,5.3 9.3,8 10.3,12.2 6.5,10 2.7,12.2 3.7,8 0.5,5.3 4.7,5" fill="#f4dc40" stroke="#8a8450" stroke-width="0.8"/><rect x="12" y="9" width="1" height="4" fill="#000"/></svg>
<div class="tx" style="left:986px;top:748px;font-size:12px;line-height:12px;color:#000;font-weight:normal;font-family:'Liberation Sans',sans-serif;letter-spacing:-0.8px">14:58</div>
</body></html>
